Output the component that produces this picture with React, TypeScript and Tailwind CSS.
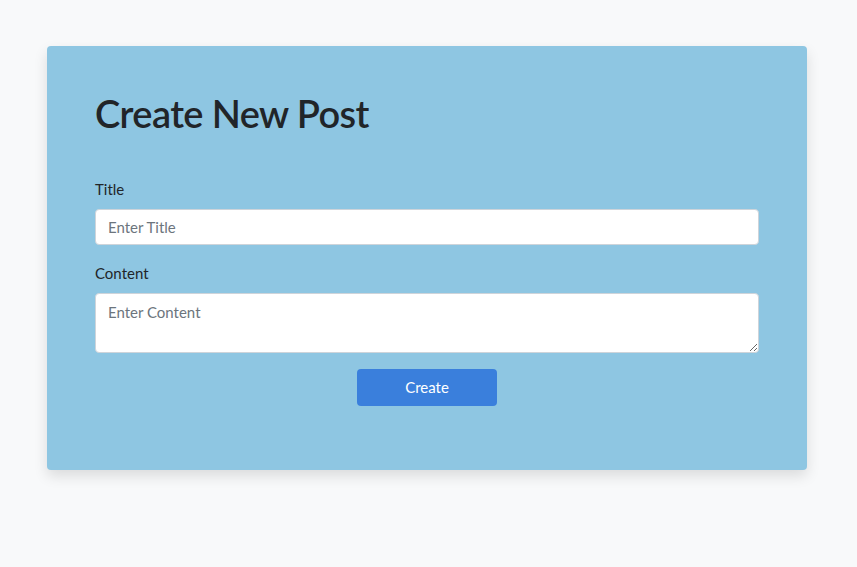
export default function App() {
  return (
    <div className="min-h-[567px] bg-[#f8f9fa] pt-[46px] px-[47px]" style={{ fontFamily: "Lato, 'Noto Sans', sans-serif" }}>
      <div className="w-[760px] h-[424px] bg-[#8ec6e2] rounded-[4px] shadow-[0_6px_14px_rgba(0,0,0,0.12)] px-12 pt-[43px]">
        <h1 className="text-[38px] leading-[48px] font-semibold tracking-[-0.6px] text-[#212529] mb-[40px]">Create New Post</h1>
        <form>
          <div className="mb-4">
            <label className="block text-[15px] leading-6 text-[#212529] mb-2">Title</label>
            <input
              type="text"
              placeholder="Enter Title"
              className="block w-full h-[36px] bg-white border border-[#ced4da] rounded-[4px] px-3 text-[15px] text-[#495057] placeholder:text-[#6c757d] outline-none"
            />
          </div>
          <div className="mb-4">
            <label className="block text-[15px] leading-6 text-[#212529] mb-2">Content</label>
            <textarea
              placeholder="Enter Content"
              className="block w-full h-[60px] bg-white border border-[#ced4da] rounded-[4px] px-3 py-[6px] text-[15px] leading-6 text-[#495057] placeholder:text-[#6c757d] outline-none resize-y"
            />
          </div>
          <div className="flex justify-center">
            <button type="button" className="w-[140px] h-[37px] bg-[#3a7fdc] text-white text-[15px] rounded-[4px]">Create</button>
          </div>
        </form>
      </div>
    </div>
  );
}
